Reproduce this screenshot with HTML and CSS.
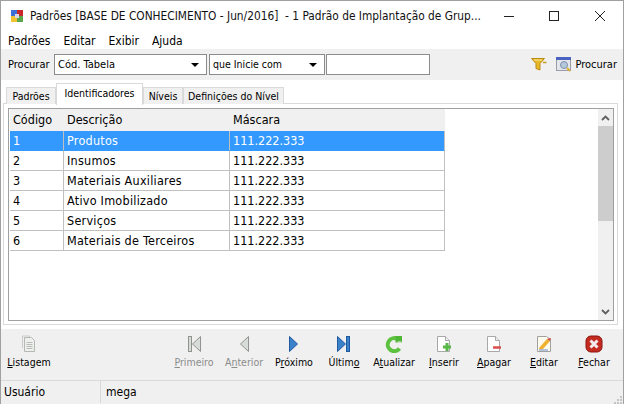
FILE: index.html
```html
<!DOCTYPE html>
<html lang="pt">
<head>
<meta charset="utf-8">
<title>Padrões</title>
<link rel="stylesheet" href="styles.css">
</head>
<body>
<div class="window">
  <header class="titlebar">
    <svg class="appicon" width="14" height="14" viewBox="0 0 14 14"><rect x="1" y="1" width="6" height="6" fill="#3a6fd8"/><rect x="7" y="1" width="6" height="6" fill="#c8282c"/><rect x="1" y="7" width="6" height="6" fill="#f2c230"/><rect x="7" y="7" width="6" height="6" fill="#58a84a"/><rect x="5" y="5" width="4" height="4" fill="#d8d8e8"/></svg>
    <span class="title">Padrões [BASE DE CONHECIMENTO - Jun/2016]  - 1 Padrão de Implantação de Grup...</span>
    <div class="winbtns">
      <svg width="12" height="12" viewBox="0 0 12 12"><path d="M1 6.500h10" stroke="#222" fill="none"/></svg>
      <svg width="12" height="12" viewBox="0 0 12 12"><rect x="1.500" y="1.500" width="9" height="9" stroke="#222" fill="none"/></svg>
      <svg width="12" height="12" viewBox="0 0 12 12"><path d="M1 1l10 10M11 1L1 11" stroke="#222" fill="none"/></svg>
    </div>
  </header>
  <nav class="menubar"><span>Padrões</span><span>Editar</span><span>Exibir</span><span>Ajuda</span></nav>
  <div class="searchbar">
    <span class="searchlabel">Procurar</span>
    <div class="combo combo-a"><span>Cód. Tabela</span><i class="arrow"></i></div>
    <div class="combo combo-b"><span>que Inicie com</span><i class="arrow"></i></div>
    <div class="field"></div>
    <svg class="filter" width="17" height="13" viewBox="0 0 17 13"><path d="M0.500 0.500h13l-4.500 5v6.500l-4-1.500v-5z" fill="#e8b828" stroke="#b88a10"/><path d="M3 2h8" stroke="#fbe79a"/><path d="M12 4.500h3.500" stroke="#c89a20" stroke-width="1.500"/></svg>
    <svg class="findicon" width="16" height="15" viewBox="0 0 16 15"><rect x="0.500" y="0.500" width="14" height="13" fill="#e4e6ee" stroke="#9a9aa8"/><rect x="0" y="0" width="15" height="3" fill="#4a62c0"/><circle cx="8" cy="8" r="3.500" fill="#b4c8dc" stroke="#7f90a8"/><path d="M11 11l3 3" stroke="#d8b030" stroke-width="2"/></svg>
    <span class="findtext">Procurar</span>
  </div>
  <div class="tabs">
    <div class="tab tab-a">Padrões</div>
    <div class="tab tab-active">Identificadores</div>
    <div class="tab tab-c">Níveis</div>
    <div class="tab tab-d">Definições do Nível</div>
  </div>
  <main class="page">
    <div class="grid">
      <table class="data">
        <thead><tr><th class="c1">Código</th><th class="c2">Descrição</th><th class="c3">Máscara</th></tr></thead>
        <tbody>
          <tr class="sel"><td>1</td><td class="desc">Produtos</td><td>111.222.333</td></tr>
          <tr><td>2</td><td class="desc">Insumos</td><td>111.222.333</td></tr>
          <tr><td>3</td><td class="desc">Materiais Auxiliares</td><td>111.222.333</td></tr>
          <tr><td>4</td><td class="desc">Ativo Imobilizado</td><td>111.222.333</td></tr>
          <tr><td>5</td><td class="desc">Serviços</td><td>111.222.333</td></tr>
          <tr><td>6</td><td class="desc">Materiais de Terceiros</td><td>111.222.333</td></tr>
        </tbody>
      </table>
      <div class="scroll">
        <div class="sbtn"><svg width="9" height="6" viewBox="0 0 9 6"><path d="M1 5l3.500-3.500L8 5" stroke="#606060" stroke-width="1.800" fill="none"/></svg></div>
        <div class="thumb"></div>
        <div class="track"></div>
        <div class="sbtn"><svg width="9" height="6" viewBox="0 0 9 6"><path d="M1 1l3.500 3.500L8 1" stroke="#606060" stroke-width="1.800" fill="none"/></svg></div>
      </div>
    </div>
  </main>
  <div class="toolbar">
    <div class="tool">
      <svg width="16" height="18" viewBox="0 0 16 18"><path d="M3.500 2.500h7l3 3v11h-10z" fill="#eef0ee" stroke="#b4b8b4"/><path d="M1.500 1h7v1M1.500 1v12" stroke="#c8ccc8" fill="none"/><path d="M5.500 7.500h6M5.500 9.500h6M5.500 11.500h6M5.500 13.500h6" stroke="#b8bcb8"/></svg>
      <span><u>L</u>istagem</span>
    </div>
    <div class="spacer"></div>
    <div class="tool off">
      <svg width="16" height="18" viewBox="0 0 16 18"><rect x="2.500" y="1.500" width="3" height="15" fill="#d8dcd8" stroke="#909490"/><path d="M14.500 1.500v15l-8-7.500z" fill="#d8dcd8" stroke="#909490"/></svg>
      <span><u>P</u>rimeiro</span>
    </div>
    <div class="tool off">
      <svg width="16" height="18" viewBox="0 0 16 18"><path d="M12.500 1.500v15l-8-7.500z" fill="#d8dcd8" stroke="#909490"/></svg>
      <span>A<u>n</u>terior</span>
    </div>
    <div class="tool">
      <svg width="16" height="18" viewBox="0 0 16 18"><path d="M3.500 1.500v15l8-7.500z" fill="#3a82cc" stroke="#1f5a9e"/></svg>
      <span>P<u>r</u>óximo</span>
    </div>
    <div class="tool">
      <svg width="16" height="18" viewBox="0 0 16 18"><path d="M1.500 1.500v15l8-7.500z" fill="#3a82cc" stroke="#1f5a9e"/><rect x="10.500" y="1.500" width="3" height="15" fill="#3a82cc" stroke="#1f5a9e"/></svg>
      <span>Últim<u>o</u></span>
    </div>
    <div class="tool">
      <svg width="18" height="18" viewBox="0 0 18 18"><path d="M14.500 13.500A6.500 6.500 0 1 1 12.500 4" fill="none" stroke="#5cc13e" stroke-width="4"/><path d="M10.500 1h6.500v6.500h-6.500z" fill="#4fb534"/><rect x="12.500" y="6.500" width="4" height="1" fill="#f0f0f0"/></svg>
      <span>A<u>t</u>ualizar</span>
    </div>
    <div class="tool">
      <svg width="16" height="18" viewBox="0 0 16 18"><path d="M1.500 1.500h8l4 4v11h-12z" fill="#fff" stroke="#a8a8a8"/><path d="M9.500 1.500v4h4" fill="#eee" stroke="#a8a8a8"/><path d="M7 12h8M11 8v8" stroke="#58b848" stroke-width="3"/></svg>
      <span><u>I</u>nserir</span>
    </div>
    <div class="tool">
      <svg width="16" height="18" viewBox="0 0 16 18"><path d="M1.500 1.500h8l4 4v11h-12z" fill="#fff" stroke="#a8a8a8"/><path d="M9.500 1.500v4h4" fill="#eee" stroke="#a8a8a8"/><path d="M7 12.500h8" stroke="#d85050" stroke-width="2.500"/></svg>
      <span><u>A</u>pagar</span>
    </div>
    <div class="tool">
      <svg width="16" height="18" viewBox="0 0 16 18"><path d="M1.500 1.500h9l4 3v12h-13z" fill="#fdfbee" stroke="#a0a0a0"/><path d="M3 13l1 2 3-1 7-8-3-2z" fill="#f0b030"/><path d="M11 4l3 2 1-3z" fill="#d04040"/><path d="M3 15h9" stroke="#9ab0d8" stroke-width="1.500"/></svg>
      <span><u>E</u>ditar</span>
    </div>
    <div class="tool">
      <svg width="18" height="18" viewBox="0 0 18 18"><rect x="1" y="1" width="16" height="16" rx="5" fill="#c42a20" stroke="#8c1610"/><path d="M5.500 5.500l7 7M12.500 5.500l-7 7" stroke="#f4ecec" stroke-width="3"/></svg>
      <span><u>F</u>echar</span>
    </div>
  </div>
  <footer class="status">
    <span class="st-a">Usuário</span>
    <span class="st-b">mega</span>
    <svg class="grip" width="10" height="10" viewBox="0 0 10 10"><path d="M7 1h2v2H7zM4 4h2v2H4zM7 4h2v2H7zM1 7h2v2H1zM4 7h2v2H4zM7 7h2v2H7z" fill="#c4c4c4"/></svg>
  </footer>
</div>
</body>
</html>
```
FILE: styles.css
```css
* { box-sizing: border-box; }
html, body { margin: 0; padding: 0; }
body {
  width: 624px;
  height: 404px;
  overflow: hidden;
  font-family: "DejaVu Sans Condensed", "DejaVu Sans", sans-serif;
  font-size: 11px;
  color: #000;
  background: #fff;
}
.window {
  width: 624px;
  height: 404px;
  display: flex;
  flex-direction: column;
  border: 1px solid #a0a0a0;
  background: #fff;
}
.titlebar {
  height: 29px;
  flex: none;
  display: flex;
  align-items: center;
  padding-left: 9px;
  background: #fff;
}
.appicon { flex: none; margin-right: 6px; }
.title { white-space: pre; width: 462px; overflow: hidden; color: #111; font-size: 11.8px; }
.winbtns { display: flex; gap: 33px; margin-left: 11px; }
.winbtns svg:last-child { margin-left: 1px; }
.menubar {
  height: 19px;
  flex: none;
  display: flex;
  align-items: center;
  padding: 2px 0 0 7px;
  gap: 13px;
  font-size: 12px;
}
.searchbar {
  height: 31px;
  flex: none;
  display: flex;
  align-items: center;
  background: #f0f0f0;
  padding-left: 7px;
  padding-right: 6px;
}
.searchlabel { width: 46px; flex: none; }
.combo, .field {
  height: 21px;
  background: #fff;
  border: 1px solid #8c8c8c;
  display: flex;
  align-items: center;
  padding-left: 3px;
  padding-bottom: 1px;
  justify-content: space-between;
}
.combo-a { width: 153px; margin-right: 2px; }
.combo-b { width: 116px; margin-right: 1px; font-size: 10.5px; }
.field { width: 104px; }
.arrow {
  width: 0;
  height: 0;
  margin-right: 7px;
  margin-top: 2px;
  border-left: 4px solid transparent;
  border-right: 4px solid transparent;
  border-top: 4px solid #000;
}
.filter { margin-left: auto; }
.findicon { margin-left: 8px; }
.findtext { margin-left: 3px; }
.tabs {
  height: 24px;
  flex: none;
  display: flex;
  align-items: flex-end;
  padding-left: 5px;
  position: relative;
  z-index: 1;
  font-size: 10.5px;
}
.tab {
  height: 17px;
  background: #f0f0f0;
  border: 1px solid #d9d9d9;
  border-bottom: 0;
  display: flex;
  align-items: center;
  justify-content: center;
  white-space: nowrap;
}
.tab-a { width: 50px; }
.tab-active { width: 87px; height: 22px; background: #fff; margin-bottom: -1px; padding-bottom: 3px; }
.tab-c { width: 40px; }
.tab-d { width: 101px; }
.page {
  flex: 1;
  margin: -1px 5px 4px 2px;
  border: 1px solid #d9d9d9;
  padding: 4px 3px 3px 4px;
  background: #fff;
}
.grid {
  height: 213px;
  border: 1px solid #a0a0a0;
  padding: 0 0 0 1px;
  display: flex;
  justify-content: space-between;
}
.data {
  border-collapse: separate;
  border-spacing: 0;
  table-layout: fixed;
  width: 435px;
  height: 142px;
  align-self: flex-start;
  font-size: 12.5px;
}
.data th, .data td {
  padding: 0 0 0 3px;
  text-align: left;
  font-weight: normal;
  border-right: 1px solid #c0c0c0;
  border-bottom: 1px solid #c0c0c0;
  height: 20px;
  line-height: 18px;
  white-space: nowrap;
}
.data th { background: #f0f0f0; height: 22px; border-bottom: 0; border-right: 0; }
.data .desc { letter-spacing: 0.25px; }
.c1 { width: 54px; }
.c2 { width: 166px; }
.sel td { background: #3399ff; color: #fff; border-bottom-color: #3399ff; }
.scroll {
  width: 15px;
  display: flex;
  flex-direction: column;
  background: #f0f0f0;
}
.sbtn { height: 17px; flex: none; display: flex; align-items: center; justify-content: center; }
.thumb { height: 95px; flex: none; background: #cdcdcd; }
.track { flex: 1; }
.toolbar {
  height: 52px;
  flex: none;
  display: flex;
  background: #f0f0f0;
  padding: 6px 4px 0 3px;
  border-bottom: 1px solid #d9d9d9;
  font-size: 10.5px;
}
.spacer { flex: 1; }
.tool {
  width: 50px;
  display: flex;
  flex-direction: column;
  align-items: center;
  gap: 3px;
  white-space: nowrap;
}
.tool svg { flex: none; }
.off { color: #8c8c8c; }
.status {
  height: 24px;
  flex: none;
  display: flex;
  align-items: center;
  background: #f0f0f0;
  position: relative;
  font-size: 12px;
  padding-bottom: 2px;
}
.st-a { width: 100px; padding-left: 3px; border-right: 1px solid #d9d9d9; height: 22px; line-height: 22px; }
.st-b { padding-left: 5px; }
.grip { position: absolute; right: 0; bottom: 0; }
```
